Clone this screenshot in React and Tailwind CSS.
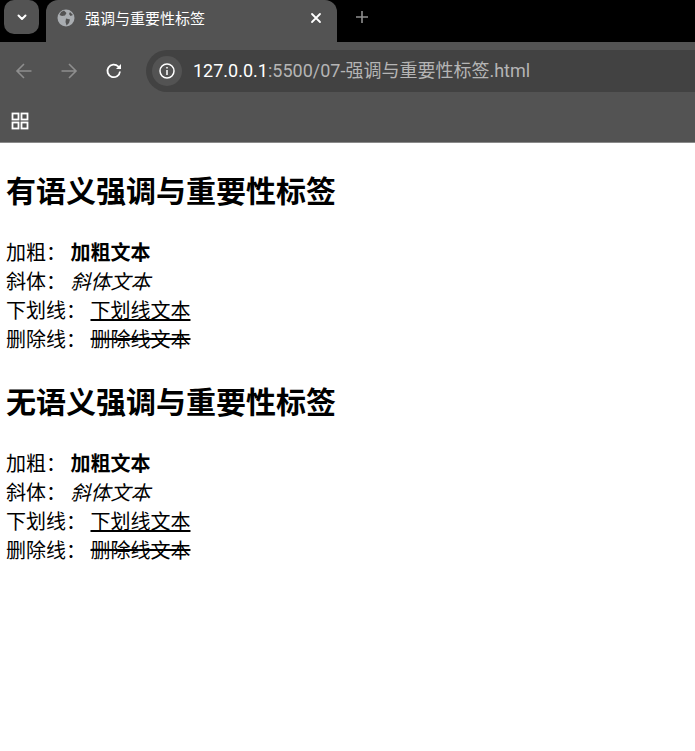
const cjk = { fontFamily: '"Noto Sans CJK SC", "Liberation Sans", sans-serif' };
const url = { fontFamily: 'Roboto, "Noto Sans CJK SC", sans-serif' };

function Section({ title }) {
  return (
    <section>
      <h2 className="text-[30px] leading-[42px] font-bold text-black m-0">{title}</h2>
      <div className="mt-[27px] text-[20px] leading-[29px] text-black">
        <div>加粗： <b className="font-bold">加粗文本</b></div>
        <div>斜体： <i className="italic">斜体文本</i></div>
        <div>下划线： <u className="underline">下划线文本</u></div>
        <div>删除线： <s className="line-through">删除线文本</s></div>
      </div>
    </section>
  );
}

export default function App() {
  return (
    <div className="w-[695px] h-[751px] bg-white overflow-hidden flex flex-col" style={cjk}>
      <div className="h-[42px] bg-black flex items-start relative shrink-0">
        <div className="ml-[4px] w-[35px] h-[34px] rounded-[10px] bg-[#535353] flex items-center justify-center">
          <svg width="12" height="12" viewBox="0 0 12 12" fill="none" stroke="#fff" strokeWidth="2" strokeLinecap="round" strokeLinejoin="round"><path d="M2.5 4.5 6 8l3.500-3.500" /></svg>
        </div>
        <div className="ml-[7px] w-[291px] h-[42px] rounded-t-[12px] bg-[#535353] flex items-center pl-[11px] pr-[15px] pb-[7px]">
          <svg width="18" height="18" viewBox="0 0 18 18" className="shrink-0">
            <circle cx="9" cy="9" r="8.500" fill="#a9adb1" />
            <path d="M7 1.500 9.500 4 8 6.500 5 7 2.500 6 4 3zM9 9.500l4 1-1 3.500-2.500 2.500L8.500 13zM13 3l3 3-2.500 1-1.500-2z" fill="#535353" />
          </svg>
          <span className="ml-[10px] text-[15px] leading-[20px] text-white flex-1">强调与重要性标签</span>
          <svg width="12" height="12" viewBox="0 0 12 12" stroke="#fff" strokeWidth="1.800" strokeLinecap="round"><path d="M2 2l8 8M10 2l-8 8" /></svg>
        </div>
        <svg width="14" height="14" viewBox="0 0 14 14" stroke="#8f8f8f" strokeWidth="1.600" className="ml-[18px] mt-[10px]"><path d="M7 1v12M1 7h12" /></svg>
      </div>

      <div className="h-[58px] bg-[#535353] flex items-center shrink-0">
        <svg width="18" height="18" viewBox="0 0 18 18" fill="none" stroke="#8e8e8e" strokeWidth="1.600" className="ml-[15px] shrink-0"><path d="M16.500 9H2M9 2 2 9l7 7" /></svg>
        <svg width="18" height="18" viewBox="0 0 18 18" fill="none" stroke="#8e8e8e" strokeWidth="1.600" className="ml-[27px] shrink-0"><path d="M1.500 9H16M9 2l7 7-7 7" /></svg>
        <svg width="18" height="18" viewBox="0 0 18 18" fill="none" stroke="#fff" strokeWidth="1.800" className="ml-[27px] shrink-0"><path d="M15 9.500A6.300 6.300 0 1 1 13.300 4.500L15.500 6.500" /><path d="M16 2v5h-5" fill="#fff" stroke="none" /></svg>
        <div className="ml-[23px] flex-1 h-[42px] rounded-l-[21px] bg-[#424242] flex items-center pl-[6px] min-w-0">
          <div className="w-[30px] h-[30px] rounded-full bg-[#535353] flex items-center justify-center shrink-0">
            <svg width="18" height="18" viewBox="0 0 18 18" fill="none" stroke="#fff" strokeWidth="1.500"><circle cx="9" cy="9" r="7" /><path d="M9 8v5M9 5v1.500" /></svg>
          </div>
          <span className="ml-[11px] text-[18px] leading-[24px] whitespace-nowrap text-[#b5b5b5]" style={url}><span className="text-white">127.0.0.1</span>:5500/07-强调与重要性标签.html</span>
        </div>
      </div>

      <div className="h-[43px] bg-[#535353] border-b border-[#8a8a8a] flex items-center shrink-0 pb-[9px] pt-[8px]">
        <svg width="18" height="18" viewBox="0 0 18 18" fill="none" stroke="#fff" strokeWidth="1.800" className="ml-[11px]">
          <rect x="1.500" y="1.500" width="6" height="6" />
          <rect x="10.500" y="1.500" width="6" height="6" />
          <rect x="1.500" y="10.500" width="6" height="6" />
          <rect x="10.500" y="10.500" width="6" height="6" />
        </svg>
      </div>

      <main className="pl-[6px] pt-[25px] flex flex-col gap-[26px]">
        <Section title="有语义强调与重要性标签" />
        <Section title="无语义强调与重要性标签" />
      </main>
    </div>
  );
}
